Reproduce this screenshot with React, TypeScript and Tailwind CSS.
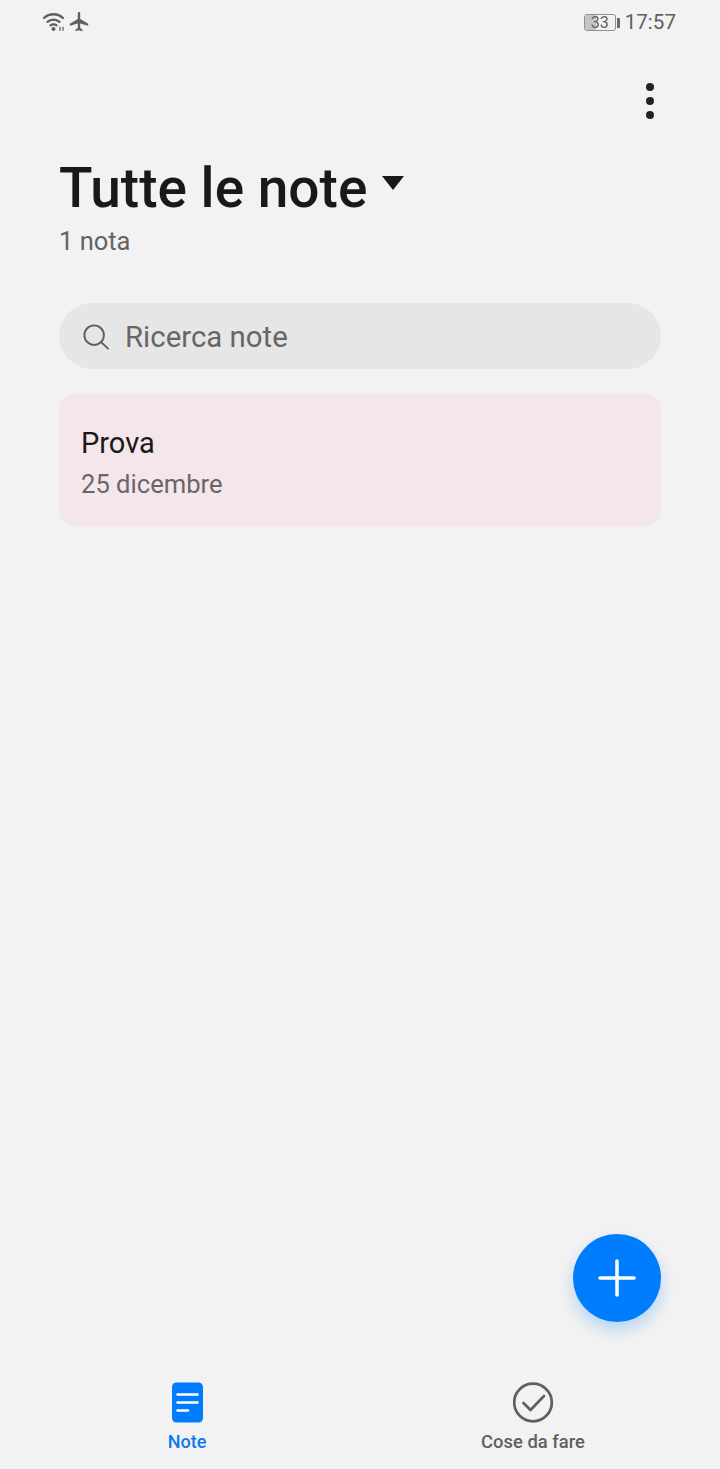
export default function App() {
  return (
    <div className="w-[720px] h-[1469px] flex flex-col bg-[#f2f2f2] font-['Roboto',sans-serif] overflow-hidden">
      <div className="h-[44px] flex items-center justify-between pl-[42px] pr-[44px] shrink-0">
        <div className="flex items-center gap-[3px]">
          <svg width="24" height="20" viewBox="0 0 24 20" fill="none" stroke="#5f5f5f" strokeWidth="2.300" strokeLinecap="round">
            <path d="M2 6C7.500 1 15.500 1 21 6" />
            <path d="M5.500 9.800C9 6.800 14 6.800 17.500 9.800" />
            <path d="M8.500 13.300C10 12.100 13 12.100 14.500 13.300" />
            <circle cx="11.500" cy="17" r="2" fill="#5f5f5f" stroke="none" />
            <path d="M18 15.500V18M21 15.500V18" strokeWidth="1.800" stroke="#8a8a8a" />
          </svg>
          <svg width="20" height="20" viewBox="0 0 20 20" fill="#5f5f5f">
            <path d="M8.800 1.500C8.800.7 9.300 0 10 0s1.200.7 1.200 1.500V7l8 4.800v2l-8-2.400V16l2.200 1.600V19.300L10 18.300l-3.400 1V17.600L8.800 16v-4.600l-8 2.400v-2l8-4.800z" />
          </svg>
        </div>
        <div className="flex items-center gap-[5px] pt-[1px]">
          <div className="flex items-center gap-[1px]">
            <div className="relative w-[32px] h-[17px] rounded-[3px] border border-[#8f8f8f] bg-[#f2f2f2] overflow-hidden flex items-center justify-center">
              <div className="absolute left-0 top-0 bottom-0 w-[11px] bg-[#c4c4c4]" />
              <span className="relative text-[16px] leading-none text-[#5f5f5f]">33</span>
            </div>
            <div className="w-[3px] h-[10px] rounded-r-[1px] bg-[#6a6a6a]" />
          </div>
          <span className="text-[20.6px] leading-none text-[#5f5f5f]">17:57</span>
        </div>
      </div>

      <div className="flex justify-end pr-[66px] pt-[39px] shrink-0">
        <div className="flex flex-col gap-[6px]">
          <div className="w-[8px] h-[8px] rounded-full bg-[#222222]" />
          <div className="w-[8px] h-[8px] rounded-full bg-[#222222]" />
          <div className="w-[8px] h-[8px] rounded-full bg-[#222222]" />
        </div>
      </div>

      <div className="px-[59px] pt-[37px] shrink-0">
        <div className="flex items-center gap-[15px] h-[64px]">
          <span className="text-[55px] leading-[64px] font-medium text-[#191919]">Tutte le note</span>
          <svg width="22" height="14" viewBox="0 0 22 14" className="mb-[10px]" fill="#191919">
            <path d="M0 0h22L11 14z" />
          </svg>
        </div>
        <div className="text-[25.5px] leading-[32px] text-[#636363] mt-[5px]">1 nota</div>

        <div className="mt-[46px] h-[66px] rounded-[33px] bg-[#e6e6e6] flex items-center pl-[24px] gap-[16px]">
          <svg width="26" height="26" viewBox="0 0 28 28" fill="none" stroke="#5f5f5f" strokeWidth="2.100" strokeLinecap="round" className="mt-[1px]">
            <circle cx="12" cy="12" r="10.500" />
            <path d="M19.500 19.500L27 26.500" />
          </svg>
          <span className="text-[29.4px] leading-none text-[#666666] pt-[3px]">Ricerca note</span>
        </div>

        <div className="mt-[25px] h-[132px] rounded-[16px] bg-[#f5e6eb] pl-[22px] pt-[30px] flex flex-col">
          <div className="text-[29px] leading-[38px] text-[#191919]">Prova</div>
          <div className="text-[25.6px] leading-[34px] text-[#69666a] mt-[5px]">25 dicembre</div>
        </div>
      </div>

      <div className="flex-1" />

      <div className="flex justify-end pr-[59px] pb-[42px] shrink-0">
        <div className="w-[88px] h-[88px] rounded-full bg-[#007dff] flex items-center justify-center shadow-[0_8px_16px_rgba(0,125,255,0.25)]">
          <svg width="38" height="38" viewBox="0 0 38 38" stroke="#ffffff" strokeWidth="3.500" strokeLinecap="round">
            <path d="M19 2V36M2 19H36" />
          </svg>
        </div>
      </div>

      <div className="h-[105px] flex shrink-0">
        <div className="w-[374px] flex flex-col items-center pt-[18px]">
          <svg width="34" height="41" viewBox="0 0 34 41">
            <rect x="2" y="0.500" width="31" height="40" rx="4.500" fill="#007dff" />
            <path d="M7.500 12.500H27.500M7.500 20.500H27.500M7.500 28.500H18" stroke="#ffffff" strokeWidth="2.500" strokeLinecap="round" />
          </svg>
          <span className="text-[18px] leading-[24px] font-medium text-[#0a7aee] mt-[7px]">Note</span>
        </div>
        <div className="w-[318px] flex flex-col items-center pt-[18px]">
          <svg width="41" height="41" viewBox="0 0 41 41" fill="none" stroke="#5f5f5f" strokeWidth="2.700" strokeLinecap="round" strokeLinejoin="round">
            <circle cx="20" cy="20.500" r="18.800" />
            <path d="M10.500 21L17.500 28L31 14" />
          </svg>
          <span className="text-[18.4px] leading-[24px] font-medium text-[#5f5f5f] mt-[7px]">Cose da fare</span>
        </div>
      </div>
    </div>
  );
}
